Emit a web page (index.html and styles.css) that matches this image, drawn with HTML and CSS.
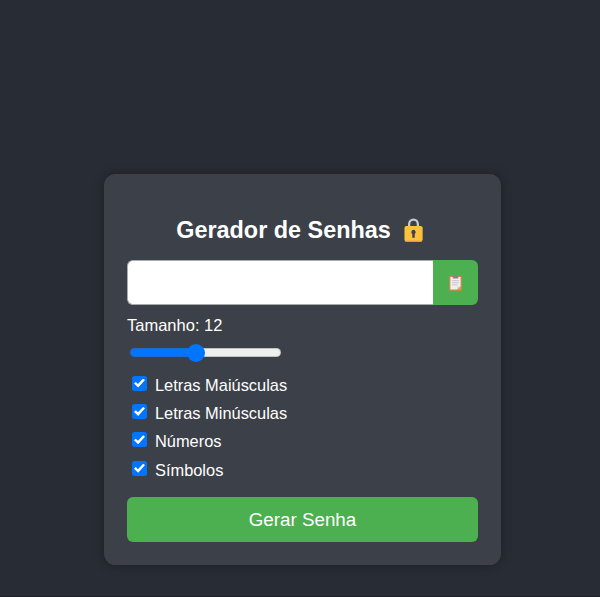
FILE: index.html
```html
<!DOCTYPE html>
<html lang="pt-BR">
<head>
<meta charset="utf-8">
<title>Gerador de Senhas</title>
<link rel="stylesheet" href="styles.css">
</head>
<body>
<main class="card">
  <h1 class="title">Gerador de Senhas
    <svg class="lock" viewBox="0 0 20 24" preserveAspectRatio="none" aria-hidden="true">
      <path d="M5.4 10V6.2a4.6 4.6 0 0 1 9.2 0V10" fill="none" stroke="#c9c9ce" stroke-width="2.4"/>
      <rect x=".5" y="8" width="19" height="15.8" rx="2" fill="#fbc23c"/>
      <path d="M1.2 22.9h17.6M19 9v13" stroke="#f2a34b" stroke-width=".8"/>
      <path d="M10 11.8a2.3 2.3 0 0 1 1.3 4.2v3.8H8.7V16A2.3 2.3 0 0 1 10 11.8z" fill="#453c58"/>
    </svg>
  </h1>
  <div class="password">
    <input class="password-field" type="text" readonly>
    <button class="copy" aria-label="Copiar">
      <svg class="clipboard" viewBox="0 0 13 16" aria-hidden="true">
        <rect x=".2" y=".8" width="12.6" height="15" rx="1" fill="#cf8a40"/>
        <path d="M1.4 2h10.2v9.4L8.3 14.6H1.4z" fill="#f0eef0"/>
        <path d="M8.3 14.6v-3.2h3.3z" fill="#d9d2cf"/>
        <path d="M11.6 11.4v3.2H8.3z" fill="#f2a048"/>
        <path d="M3.8 1.2h1.4a1.3 1.3 0 0 1 2.6 0h1.4v2.2H3.8z" fill="#85818d"/>
        <path d="M3 5.7h7M3 7.8h7M3 9.9h5.5" stroke="#c2c1c7" stroke-width=".9"/>
      </svg>
    </button>
  </div>
  <label class="length" for="length">Tamanho: 12</label>
  <input class="slider" id="length" type="range" min="4" max="22.6" step="any" value="12">
  <div class="options">
    <label class="option"><input class="check" type="checkbox" checked>Letras Maiúsculas</label>
    <label class="option"><input class="check" type="checkbox" checked>Letras Minúsculas</label>
    <label class="option"><input class="check" type="checkbox" checked>Números</label>
    <label class="option"><input class="check" type="checkbox" checked>Símbolos</label>
  </div>
  <button class="generate">Gerar Senha</button>
</main>
</body>
</html>
```
FILE: styles.css
```css
* { box-sizing: border-box; }

body {
  margin: 0;
  height: 597px;
  padding: 174px 0 0 104px;
  overflow: hidden;
  background: #282c34;
  border-bottom: 1px solid #1d2027;
  color: #fff;
  font-family: "Liberation Sans", Arial, sans-serif;
}

.card {
  width: 397px;
  height: 391px;
  padding: 42px 23px 23px;
  display: flex;
  flex-direction: column;
  border-radius: 11.5px;
  background: #3c4048;
  box-shadow: 0 0 11px rgba(0, 0, 0, .3);
}

.title {
  margin: 0;
  height: 28px;
  padding-right: 6px;
  display: flex;
  justify-content: center;
  align-items: center;
  gap: 13px;
  font-size: 23.4px;
  line-height: 28px;
}

.lock { width: 19px; height: 24px; }

.password {
  display: flex;
  height: 45px;
  margin-top: 15.5px;
}

.password-field {
  flex: 1;
  min-width: 0;
  border: 1px solid #aaabae;
  border-right: 0;
  border-radius: 6px 0 0 6px;
  background: #fff;
}

.copy {
  width: 45px;
  padding: 2px 0 0;
  display: flex;
  align-items: center;
  justify-content: center;
  border: 0;
  border-radius: 0 6px 6px 0;
  background: #4caf50;
}

.clipboard { width: 13px; height: 16px; }

.length {
  margin-top: 10.5px;
  font-size: 16.5px;
  line-height: 20px;
}

.slider {
  appearance: none;
  width: 151px;
  height: 19px;
  margin: 8px 0 0 3px;
  background: none;
}

.slider::-webkit-slider-runnable-track {
  height: 9px;
  border: 1px solid rgba(90, 90, 90, .3);
  border-radius: 5px;
  background: linear-gradient(90deg, #0075ff 43%, #efefef 43%) border-box;
}

.slider::-webkit-slider-thumb {
  appearance: none;
  width: 18px;
  height: 18px;
  margin-top: -5.5px;
  border-radius: 50%;
  background: #0075ff;
}

.options {
  margin-top: 8.4px;
  display: flex;
  flex-direction: column;
}

.option {
  height: 28.4px;
  display: flex;
  align-items: center;
  font-size: 16.4px;
  line-height: 20px;
}

.check {
  appearance: none;
  width: 15px;
  height: 15px;
  margin: -3px 8px 0 5px;
  border-radius: 2.5px;
  background: #0075ff;
  display: grid;
  place-items: center;
}

.check::after {
  content: "";
  width: 11px;
  height: 9px;
  background: #fff;
  clip-path: polygon(0 55%, 16% 37%, 36% 60%, 83% 0, 100% 15%, 38% 100%);
}

.generate {
  margin-top: auto;
  height: 45px;
  padding: 0;
  border: 0;
  border-radius: 6px;
  background: #4caf50;
  color: #fff;
  font-family: inherit;
  font-size: 18.8px;
}
```
